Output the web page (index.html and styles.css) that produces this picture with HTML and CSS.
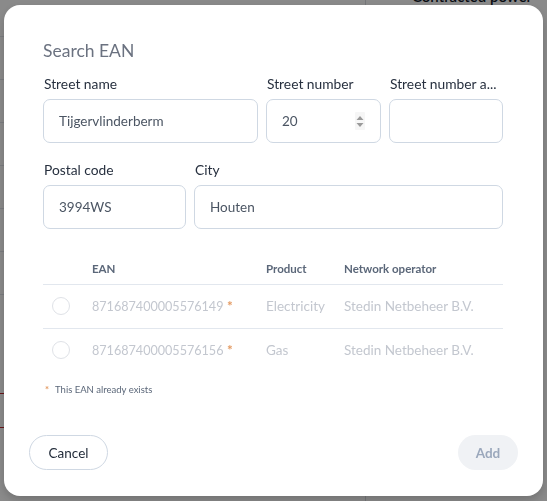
FILE: index.html
```html
<!DOCTYPE html>
<html lang="en">
<head>
<meta charset="utf-8">
<title>Search EAN</title>
<link rel="stylesheet" href="styles.css">
</head>
<body>
  <div class="page">
    <div class="list">
      <div class="list-row list-row--first"></div>
      <div class="list-row"></div>
      <div class="list-row"></div>
      <div class="list-row"></div>
      <div class="list-row"></div>
      <div class="list-row"></div>
      <div class="list-row"></div>
      <div class="list-error"></div>
    </div>
    <div class="detail">
      <h2 class="detail-title">Contracted power</h2>
    </div>
  </div>

  <div class="overlay">
    <div class="modal" role="dialog" aria-labelledby="modal-title">
      <h1 class="modal-title" id="modal-title">Search EAN</h1>

      <div class="form-row form-row--address">
        <label class="field">
          <span class="field-label">Street name</span>
          <span class="field-box"><input class="field-input" type="text" value="Tijgervlinderberm"></span>
        </label>
        <label class="field">
          <span class="field-label">Street number</span>
          <span class="field-box">
            <input class="field-input field-input--number" type="text" value="20">
            <svg class="spinner" width="10" height="20" viewBox="0 0 10 20">
              <rect x="0" y="1" width="10" height="18" rx="1" fill="#f6f6f6"/>
              <path d="M5 5 L8.5 9 L1.5 9 Z" fill="#9a9a9a"/>
              <path d="M5 16 L8.5 12 L1.5 12 Z" fill="#9a9a9a"/>
            </svg>
          </span>
        </label>
        <label class="field">
          <span class="field-label">Street number a...</span>
          <span class="field-box"><input class="field-input" type="text" value=""></span>
        </label>
      </div>

      <div class="form-row form-row--city">
        <label class="field">
          <span class="field-label">Postal code</span>
          <span class="field-box"><input class="field-input" type="text" value="3994WS"></span>
        </label>
        <label class="field">
          <span class="field-label">City</span>
          <span class="field-box"><input class="field-input" type="text" value="Houten"></span>
        </label>
      </div>

      <table class="ean-table">
        <thead>
          <tr>
            <th class="col-select"></th>
            <th class="col-ean">EAN</th>
            <th class="col-product">Product</th>
            <th class="col-operator">Network operator</th>
          </tr>
        </thead>
        <tbody>
          <tr class="row-disabled">
            <td class="col-select"><span class="radio"></span></td>
            <td class="col-ean"><span class="ean-code">871687400005576149</span> <span class="mark">*</span></td>
            <td class="col-product">Electricity</td>
            <td class="col-operator">Stedin Netbeheer B.V.</td>
          </tr>
          <tr class="row-disabled">
            <td class="col-select"><span class="radio"></span></td>
            <td class="col-ean"><span class="ean-code">871687400005576156</span> <span class="mark">*</span></td>
            <td class="col-product">Gas</td>
            <td class="col-operator">Stedin Netbeheer B.V.</td>
          </tr>
        </tbody>
      </table>

      <p class="footnote"><span class="mark">*</span>This EAN already exists</p>

      <div class="modal-footer">
        <button class="btn btn--outline" type="button">Cancel</button>
        <button class="btn btn--disabled" type="button" disabled>Add</button>
      </div>
    </div>
  </div>
</body>
</html>
```

FILE: styles.css
```css
* {
  box-sizing: border-box;
}

html, body {
  margin: 0;
  height: 100%;
  overflow: hidden;
}

body {
  font-family: "Lato", "Liberation Sans", sans-serif;
  background: #ffffff;
  color: #27303f;
}

/* Page underneath the dialog */
.page {
  display: grid;
  grid-template-columns: 366px 1fr;
  height: 100%;
}

.list {
  border-right: 1px solid #d8dbe0;
}

.list-row {
  height: 43px;
  border-bottom: 1px solid #e3e6ec;
}

.list-row--first {
  height: 37px;
}

.list-error {
  margin-top: 98px;
  height: 35px;
  border-top: 1px solid #c0262d;
  border-bottom: 1px solid #c0262d;
}

.detail {
  padding-left: 46px;
}

.detail-title {
  margin: -14px 0 0;
  font-size: 15px;
  line-height: 20px;
  font-weight: 600;
  color: #111827;
}

/* Dialog */
.overlay {
  position: fixed;
  inset: 0;
  background: rgba(0, 0, 0, 0.46);
  padding: 5px 4px;
}

.modal {
  display: flex;
  flex-direction: column;
  width: 539px;
  height: 491px;
  padding: 36px 40px 26px 39px;
  background: #ffffff;
  border-radius: 16px;
  box-shadow: 0 4px 10px rgba(0, 0, 0, 0.18);
}

.modal-title {
  margin: 0 0 15px;
  font-size: 17.5px;
  line-height: 20px;
  font-weight: 400;
  color: #6b7280;
}

.form-row {
  display: grid;
  gap: 8px;
}

.form-row--address {
  grid-template-columns: 215px 115px 114px;
}

.form-row--city {
  grid-template-columns: 143px 309px;
  margin-top: 19px;
}

.field {
  display: flex;
  flex-direction: column;
  gap: 7px;
  min-width: 0;
}

.field-label {
  font-size: 13.8px;
  line-height: 16px;
  color: #27303f;
  white-space: nowrap;
  overflow: hidden;
  padding-left: 1px;
}

.field-box {
  display: flex;
  align-items: center;
  height: 44px;
  border: 1px solid #cfd8e3;
  border-radius: 7px;
  background: #ffffff;
}

.field-input {
  flex: 1;
  min-width: 0;
  height: 100%;
  border: 0;
  outline: 0;
  background: transparent;
  padding: 0 0 0 15px;
  font-family: inherit;
  font-size: 13.5px;
  color: #4b5563;
}

.spinner {
  margin-right: 15px;
  flex: none;
}

/* EAN results */
.ean-table {
  width: 100%;
  margin-top: 25px;
  border-collapse: collapse;
  table-layout: fixed;
}

.ean-table th,
.ean-table td {
  padding: 0;
  text-align: left;
  white-space: nowrap;
}

.ean-table th {
  height: 30px;
  font-size: 11.5px;
  font-weight: 700;
  color: #5b6779;
  border-bottom: 1px solid #e2e7ee;
}

.ean-table td {
  height: 44px;
  font-size: 13.5px;
  color: #c3c7cf;
}

.ean-code {
  font-size: 12.6px;
}

.ean-table tbody tr:first-child td {
  border-bottom: 1px solid #e2e7ee;
}

.col-select {
  width: 49px;
}

.col-ean {
  width: 174px;
}

.col-product {
  width: 78px;
}

.radio {
  display: block;
  width: 18px;
  height: 18px;
  margin-left: 9px;
  border: 1px solid #dfe2e7;
  border-radius: 50%;
}

.mark {
  color: #e39a62;
  font-weight: 700;
}

.footnote {
  margin: 12px 0 0 2px;
  font-size: 9.5px;
  line-height: 12px;
  color: #5b6779;
}

.footnote .mark {
  margin-right: 6px;
}

/* Actions */
.modal-footer {
  display: flex;
  justify-content: space-between;
  margin: auto -15px 0 -14px;
}

.btn {
  height: 35px;
  border-radius: 18px;
  font-family: inherit;
  font-size: 13.5px;
  cursor: pointer;
}

.btn--outline {
  width: 79px;
  border: 1px solid #cfd8e3;
  background: #ffffff;
  color: #1f2937;
}

.btn--disabled {
  width: 60px;
  border: 0;
  background: #f0f2f5;
  color: #9ba8bc;
  font-weight: 700;
  cursor: default;
}
```
